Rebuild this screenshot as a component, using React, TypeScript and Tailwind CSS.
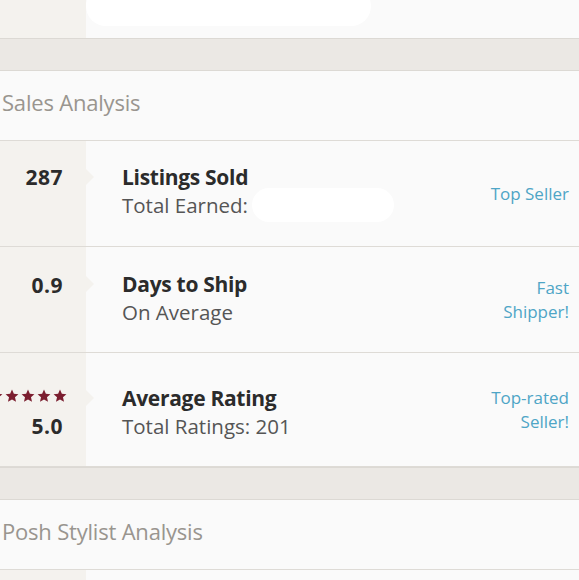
import React from "react";

const font = { fontFamily: "'Open Sans', Lato, sans-serif" };

function Star() {
  return (
    <svg viewBox="0 0 24 24" className="w-[14px] h-[14px]" fill="#7b1e2f">
      <path d="M12 1l3.2 7.2 7.8.7-5.9 5.2 1.8 7.7L12 17.8l-6.9 4 1.8-7.7L1 8.9l7.8-.7z" />
    </svg>
  );
}

function Band() {
  return <div className="h-[33px] bg-[#ebe8e4] border-y border-[#dcd9d4]" />;
}

function Header({ title }: { title: string }) {
  return (
    <div className="h-[70px] bg-[#fafafa] border-b border-[#dedbd6] flex items-center pl-[2px] pb-[6px]">
      <span className="text-[22px] tracking-[-0.2px] text-[#99958f]">{title}</span>
    </div>
  );
}

type RowProps = {
  height: string;
  pad: string;
  left: React.ReactNode;
  title: string;
  sub: React.ReactNode;
  badge: string[];
  notchTop: string;
};

function Row({ height, pad, left, title, sub, badge, notchTop }: RowProps) {
  return (
    <div className={`flex border-b border-[#dedbd6] bg-[#fafafa] ${height}`}>
      <div className="relative w-[86px] shrink-0 bg-[#f4f2ee] flex flex-col items-end justify-center pr-[23px]">
        {left}
        <div
          className={`absolute left-[86px] ${notchTop} w-0 h-0 border-y-[8px] border-y-transparent border-l-[8px] border-l-[#f4f2ee]`}
        />
      </div>
      <div className="flex-1 flex items-center pl-[36px] pr-[10px]">
        <div className={`flex-1 ${pad}`}>
          <div className="text-[21px] font-bold text-[#2b2b2b] leading-[28px] tracking-[-0.3px]">{title}</div>
          <div className="text-[20.5px] text-[#555] leading-[28px] flex items-center">{sub}</div>
        </div>
        <div className="text-right text-[17px] text-[#4ea5c6] leading-[24px]">
          {badge.map((b) => (
            <div key={b}>{b}</div>
          ))}
        </div>
      </div>
    </div>
  );
}

const num = "text-[21px] font-bold text-[#2b2b2b] leading-[28px] tracking-[0.5px]";

export default function App() {
  return (
    <div className="w-[579px] h-[580px] overflow-hidden bg-[#fafafa]" style={font}>
      <div className="h-[38px] flex">
        <div className="w-[86px] bg-[#f4f2ee]" />
        <div className="flex-1 relative bg-[#fafafa]">
          <div className="absolute left-[0px] top-[-14px] w-[285px] h-[40px] bg-white rounded-full" />
        </div>
      </div>
      <Band />
      <Header title="Sales Analysis" />
      <Row
        height="h-[106px]"
        pad="pb-[5px]"
        notchTop="top-[28px]"
        left={<div className={`${num} -mt-[28px] mb-[6px]`}>287</div>}
        title="Listings Sold"
        sub={
          <>
            Total Earned:
            <span className="ml-[4px] inline-block w-[142px] h-[34px] -my-[3px] bg-white rounded-full" />
          </>
        }
        badge={["Top Seller"]}
      />
      <Row
        height="h-[106px]"
        pad="pb-[3px]"
        notchTop="top-[29px]"
        left={<div className={`${num} -mt-[28px] mb-[2px]`}>0.9</div>}
        title="Days to Ship"
        sub="On Average"
        badge={["Fast", "Shipper!"]}
      />
      <Row
        height="h-[114px]"
        pad="pt-[4px]"
        notchTop="top-[37px]"
        left={
          <div className="flex flex-col items-end mt-[10px]">
            <div className="flex gap-[2px] -mr-[4px] mb-[9px]">
              <Star />
              <Star />
              <Star />
              <Star />
              <Star />
            </div>
            <div className={num}>5.0</div>
          </div>
        }
        title="Average Rating"
        sub="Total Ratings: 201"
        badge={["Top-rated", "Seller!"]}
      />
      <Band />
      <Header title="Posh Stylist Analysis" />
      <div className="h-[20px] flex">
        <div className="w-[86px] bg-[#f4f2ee]" />
        <div className="flex-1 bg-[#fafafa]" />
      </div>
    </div>
  );
}
